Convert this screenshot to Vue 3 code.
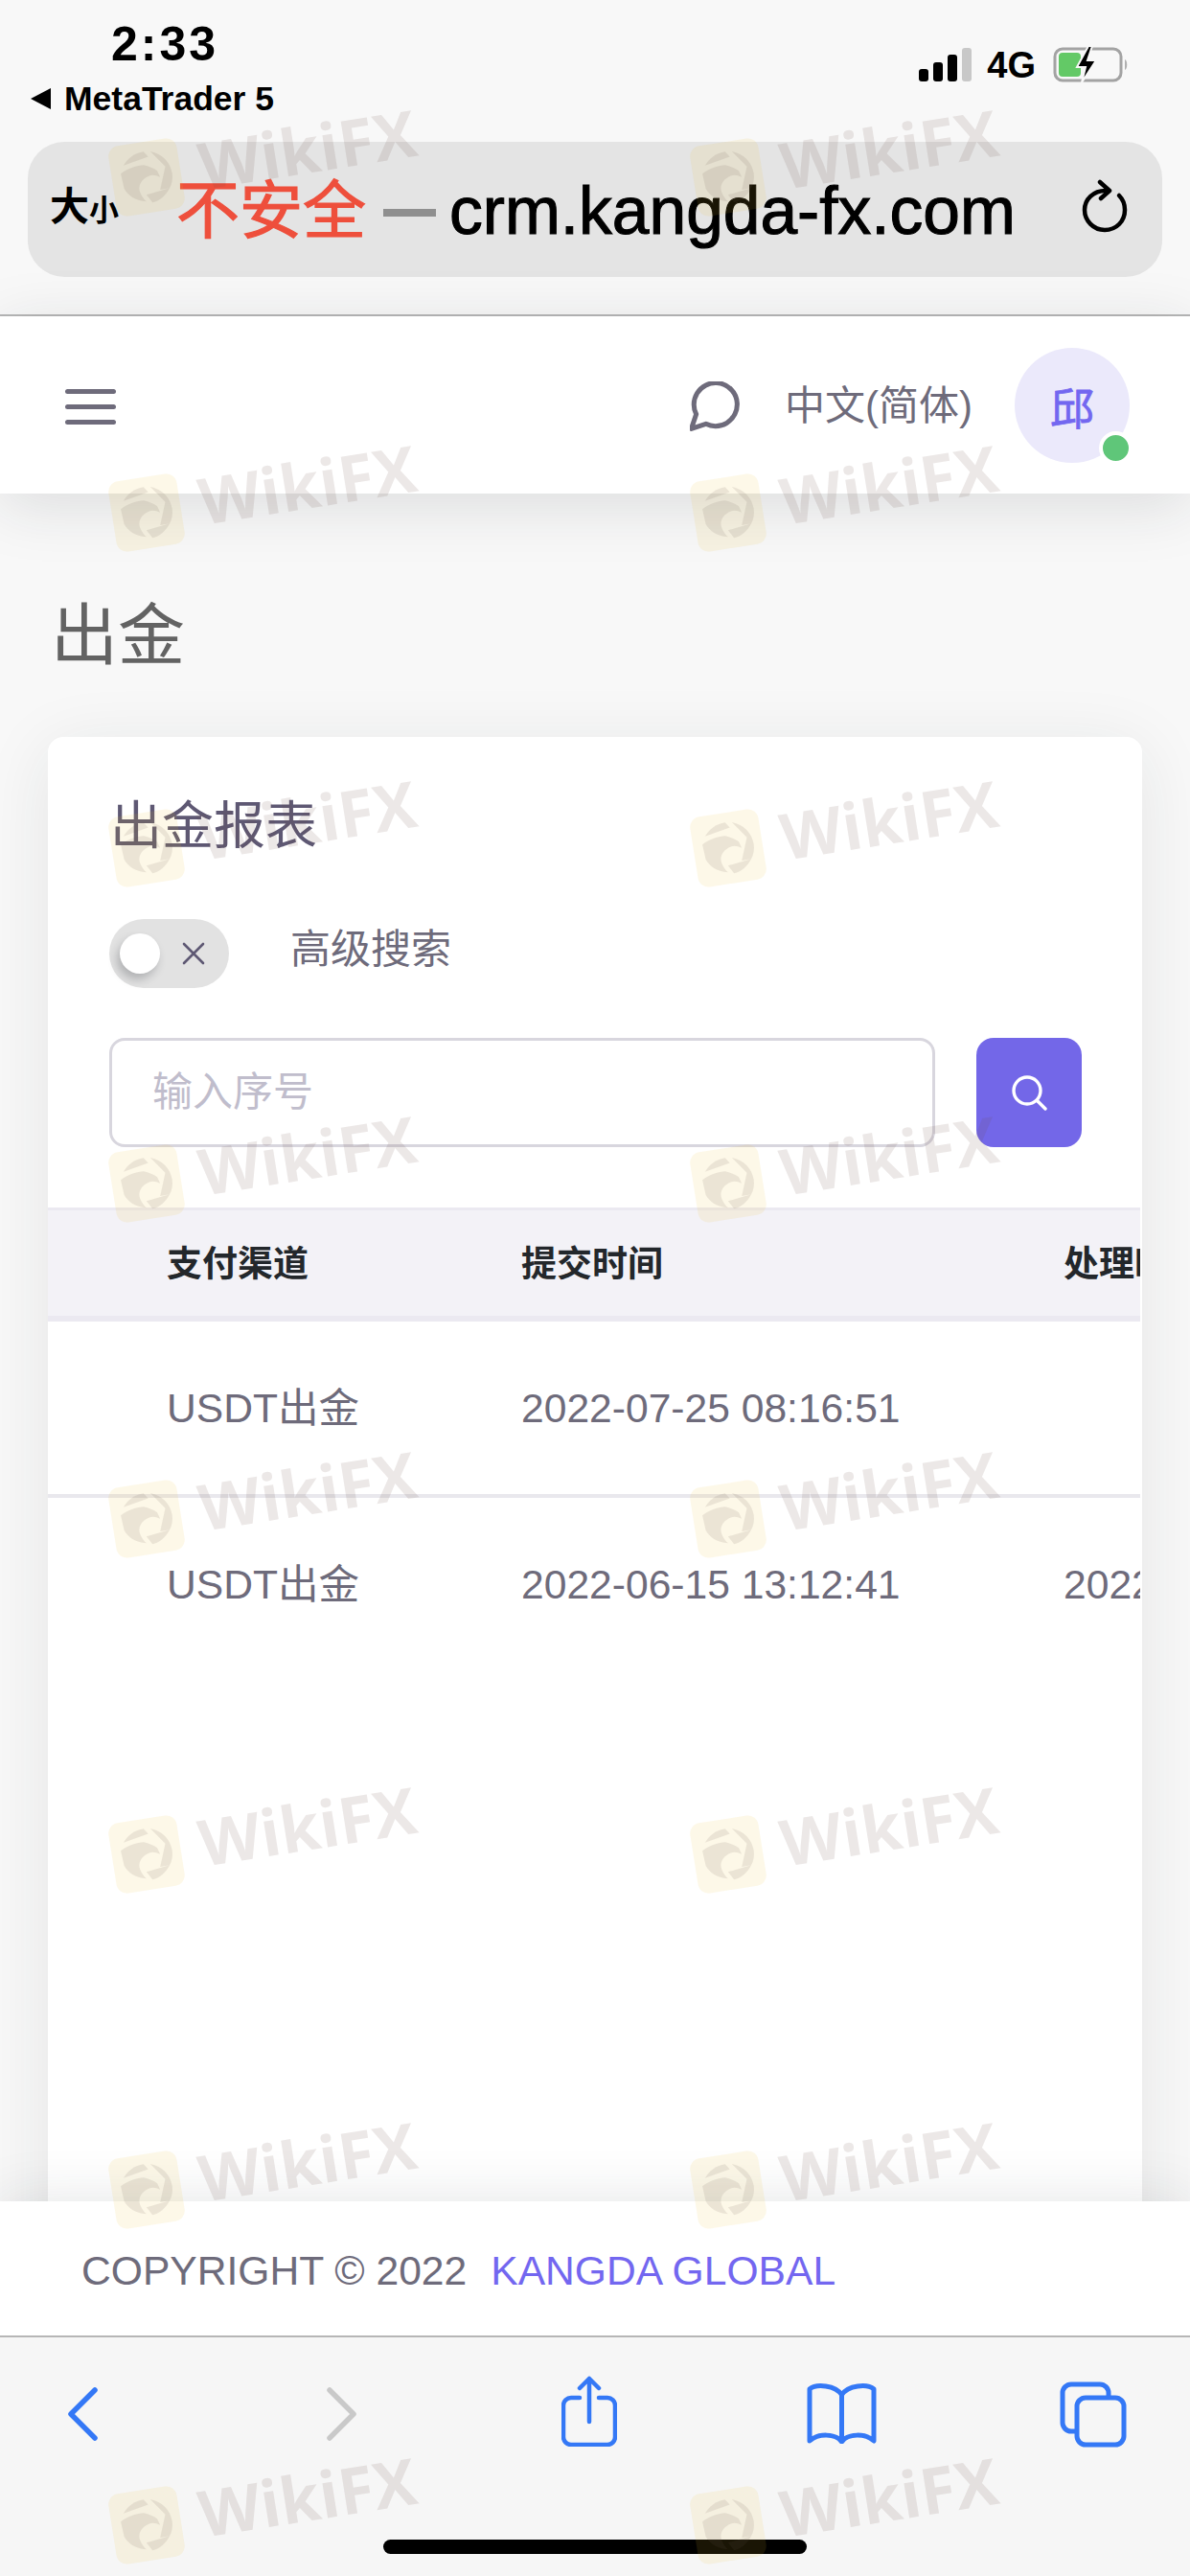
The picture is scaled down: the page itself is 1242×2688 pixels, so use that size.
<script setup>
const watermarkCells = Array.from({ length: 16 }, (_, i) => i)

const columns = ['支付渠道', '提交时间', '处理时间']
const rows = [
  ['USDT出金', '2022-07-25 08:16:51', ''],
  ['USDT出金', '2022-06-15 13:12:41', '2022-06-15 15:40:08'],
]
</script>

<template>
  <div class="phone">
    <header class="browser-top">
      <div class="status">
        <div class="status-left">
          <div class="time">2:33</div>
          <div class="back-app"><span class="back-tri"></span>MetaTrader 5</div>
        </div>
        <div class="status-right">
          <div class="signal">
            <i class="b1"></i><i class="b2"></i><i class="b3"></i><i class="b4"></i>
          </div>
          <span class="net">4G</span>
          <svg class="battery" width="80" height="40" viewBox="0 0 80 40">
            <rect x="2" y="4" width="69" height="33" rx="8" fill="none" stroke="#a3a3a3" stroke-width="3" />
            <rect x="6" y="8" width="23" height="25" rx="4" fill="#63c966" />
            <path d="M75 15c3 1 3 10 0 11z" fill="#b0b0b0" />
            <path d="M37 1 25 23h9l-4 16 15-23h-9l5-15z" fill="#000" stroke="#f8f8f8" stroke-width="2" />
          </svg>
        </div>
      </div>
      <div class="address">
        <span class="text-size">大<small>小</small></span>
        <span class="unsafe">不安全</span>
        <span class="dash"></span>
        <span class="url">crm.kangda-fx.com</span>
        <svg class="reload" width="50" height="60" viewBox="0 0 50 60" fill="none" stroke="#000" stroke-width="4.5" stroke-linecap="round" stroke-linejoin="round">
          <path d="M26 12C13 12 4 21 4 32s9 21 21 21 21-9 21-21c0-6-2-11-6-15" />
          <path d="M20 3l10 9-9 8" />
        </svg>
      </div>
    </header>

    <nav class="topnav">
      <div class="burger"><i></i><i></i><i></i></div>
      <div class="nav-right">
        <svg class="chat" width="52" height="53" viewBox="2.4 2.6 19.6 19.6" fill="none" stroke="#6e6b7b" stroke-width="1.9" stroke-linejoin="round">
          <path d="M21 11.5a8.38 8.38 0 0 1-.9 3.8 8.5 8.5 0 0 1-7.6 4.7 8.38 8.38 0 0 1-3.8-.9L3 21l1.9-5.7a8.38 8.38 0 0 1-.9-3.8 8.5 8.5 0 0 1 4.7-7.6 8.38 8.38 0 0 1 3.8-.9h.5a8.48 8.48 0 0 1 8 8v.5z" />
        </svg>
        <span class="lang">中文(简体)</span>
        <div class="avatar">邱<span class="online"></span></div>
      </div>
    </nav>

    <main class="content">
      <h1 class="page-title">出金</h1>
      <section class="card">
        <h2 class="card-title">出金报表</h2>
        <div class="filter-row">
          <div class="switch">
            <span class="knob"></span>
            <svg width="24" height="24" viewBox="0 0 24 24" stroke="#5e5873" stroke-width="2.6" stroke-linecap="round">
              <path d="M2 2l20 20M22 2 2 22" />
            </svg>
          </div>
          <span class="filter-label">高级搜索</span>
        </div>
        <div class="search-row">
          <input class="search-input" type="text" placeholder="输入序号" />
          <button class="search-btn">
            <svg width="37" height="37" viewBox="0 0 37 37" fill="none" stroke="#fff" stroke-width="3.4" stroke-linecap="round">
              <circle cx="16" cy="16" r="14" />
              <path d="M27 27l8 8" />
            </svg>
          </button>
        </div>
        <div class="table">
          <div class="tr head">
            <div v-for="c in columns" :key="c" class="td">{{ c }}</div>
          </div>
          <div v-for="(r, i) in rows" :key="i" class="tr row">
            <div v-for="(v, j) in r" :key="j" class="td">{{ v }}</div>
          </div>
        </div>
      </section>
    </main>

    <footer class="copyright">
      <span>COPYRIGHT © 2022</span><a class="brand">KANGDA GLOBAL</a>
    </footer>

    <div class="toolbar">
      <div class="tool-icons">
        <svg class="t-back" width="33" height="56" viewBox="0 0 33 56" fill="none" stroke="#3478f6" stroke-width="5.5" stroke-linecap="round" stroke-linejoin="round">
          <path d="M29 3 4 28l25 25" />
        </svg>
        <svg class="t-fwd" width="33" height="56" viewBox="0 0 33 56" fill="none" stroke="#c9c9c9" stroke-width="5.5" stroke-linecap="round" stroke-linejoin="round">
          <path d="M4 3l25 25L4 53" />
        </svg>
        <svg class="t-share" width="58" height="74" viewBox="0 0 58 74" fill="none" stroke="#3478f6" stroke-width="4.5" stroke-linecap="round" stroke-linejoin="round">
          <path d="M19 23h-9a8 8 0 0 0-8 8v33a8 8 0 0 0 8 8h38a8 8 0 0 0 8-8V31a8 8 0 0 0-8-8h-9" />
          <path d="M29 3v45M19 13 29 3l10 10" />
        </svg>
        <svg class="t-book" width="73" height="63" viewBox="0 0 73 63" fill="none" stroke="#3478f6" stroke-width="5" stroke-linejoin="round">
          <path d="M36.500 12C30 2 10 0 3 6v54c9-8 27-8 33.500 1C43 52 61 52 70 60V6C63 0 43 2 36.500 12zM36.500 12v49" />
        </svg>
        <svg class="t-tabs" width="70" height="69" viewBox="0 0 70 69" fill="none" stroke="#3478f6" stroke-width="5" stroke-linejoin="round">
          <path d="M17 52h-5a9 9 0 0 1-9-9V12a9 9 0 0 1 9-9h30a9 9 0 0 1 9 9v5" />
          <rect x="18" y="17" width="49" height="49" rx="9" />
        </svg>
      </div>
      <div class="home-bar"></div>
    </div>

    <div class="watermarks">
      <svg v-for="n in watermarkCells" :key="n" class="wm" width="607" height="350" viewBox="0 0 607 350">
        <g transform="translate(100 175) rotate(-9)">
          <rect x="-36" y="-37" width="72" height="74" rx="11" fill="rgba(240,195,50,.11)" />
          <g fill="rgba(110,90,85,.12)">
            <path d="M-26-8C-18-12-8-14-1-13c5 2 10 5 13 8l2 7c-4-3-8-4-11-3C-6 1-11 8-9 15c1 4 3 8 5 10C-16 22-22 16-25 8z" />
            <path d="M-22-16C-16-23-8-27 1-27l4 6z" />
            <path d="M8-26C20-22 27-11 27 0c0 6-2 11-5 15H12L21-8z" />
            <path d="M-3 18l25-3C17 22 9 27 2 27z" />
          </g>
          <text x="56" y="22" class="wm-text">WikiFX</text>
        </g>
      </svg>
    </div>
  </div>
</template>

<style>
html,
body {
  margin: 0;
  background: #f8f8f8;
}
</style>

<style scoped>
.phone {
  position: relative;
  width: 1242px;
  height: 2688px;
  overflow: hidden;
  display: flex;
  flex-direction: column;
  background: #f8f8f8;
  font-family: "Liberation Sans", "Noto Sans CJK SC", sans-serif;
}

/* safari top */
.browser-top {
  height: 330px;
  box-sizing: border-box;
  background: #f8f8f8;
  border-bottom: 2px solid #b6b6b6;
  padding: 0 29px;
  flex-shrink: 0;
}
.status {
  height: 148px;
  display: flex;
  justify-content: space-between;
}
.status-left {
  padding-top: 19px;
}
.time {
  font-size: 50px;
  line-height: 54px;
  font-weight: 700;
  letter-spacing: 3px;
  margin-left: 87px;
  color: #000;
}
.back-app {
  display: flex;
  align-items: center;
  font-size: 35.500px;
  line-height: 38px;
  font-weight: 700;
  margin-top: 11px;
  color: #000;
}
.back-tri {
  width: 0;
  height: 0;
  border-top: 11px solid transparent;
  border-bottom: 11px solid transparent;
  border-right: 21px solid #000;
  margin: 0 14px 0 3px;
}
.status-right {
  display: flex;
  align-items: flex-end;
  height: 88px;
  padding-right: 34px;
}
.signal {
  display: flex;
  align-items: flex-end;
  gap: 5px;
  height: 35px;
  margin-bottom: 3px;
}
.signal i {
  width: 10px;
  background: #000;
  border-radius: 3px;
}
.signal .b1 { height: 13px; }
.signal .b2 { height: 20px; }
.signal .b3 { height: 28px; }
.signal .b4 { height: 35px; background: #c8c8c8; }
.net {
  font-size: 38px;
  line-height: 40px;
  font-weight: 700;
  margin: 0 18px 0 16px;
  color: #000;
}
.battery {
  margin-bottom: 1px;
}
.address {
  height: 141px;
  border-radius: 38px;
  background: #e4e4e4;
  display: flex;
  align-items: center;
  padding-left: 23px;
  color: #000;
}
.text-size {
  width: 132px;
  flex-shrink: 0;
  font-size: 41px;
  font-weight: 700;
  line-height: 44px;
  margin-top: -2px;
}
.text-size small {
  font-size: 31px;
}
.unsafe {
  font-size: 66px;
  line-height: 70px;
  color: #ee4f3c;
  -webkit-text-stroke: 1.2px #ee4f3c;
  margin-top: 2px;
}
.dash {
  width: 55px;
  height: 8px;
  background: #8f8f8f;
  margin: 6px 14px 0 18px;
}
.url {
  font-size: 69.500px;
  line-height: 76px;
  -webkit-text-stroke: 1.1px #000;
  margin-top: 2px;
}
.reload {
  margin-left: 68px;
  margin-top: -4px;
}

/* nav */
.topnav {
  position: relative;
  z-index: 2;
  height: 185px;
  flex-shrink: 0;
  background: #fff;
  display: flex;
  align-items: center;
  justify-content: space-between;
  padding: 0 63px 0 68px;
  box-shadow: 0 12px 60px rgba(34, 41, 47, 0.13);
}
.burger {
  display: flex;
  flex-direction: column;
  gap: 11px;
  margin-top: 3px;
}
.burger i {
  display: block;
  width: 53px;
  height: 5px;
  border-radius: 3px;
  background: #6e6b7b;
}
.nav-right {
  display: flex;
  align-items: center;
}
.chat {
  margin: 3px 47px 0 0;
}
.lang {
  font-size: 42px;
  color: #6e6b7b;
  margin: -6px 44px 0 0;
}
.avatar {
  position: relative;
  width: 120px;
  height: 120px;
  border-radius: 50%;
  background: #ebe9fb;
  color: #7367f0;
  font-size: 46px;
  -webkit-text-stroke: 0.8px #7367f0;
  display: flex;
  align-items: center;
  justify-content: center;
}
.online {
  position: absolute;
  right: -3px;
  bottom: -2px;
  width: 27px;
  height: 27px;
  border-radius: 50%;
  background: #5fc679;
  border: 4px solid #fff;
}

/* content */
.content {
  flex: 1;
  min-height: 0;
  padding: 115px 50px 0;
  overflow: hidden;
}
.page-title {
  margin: 0 0 71px 3px;
  font-size: 70px;
  line-height: 68px;
  font-weight: 400;
  color: #636363;
}
.card {
  height: 1700px;
  width: 1142px;
  background: #fff;
  border-radius: 16px;
  box-shadow: 0 12px 72px rgba(34, 41, 47, 0.09);
  padding-top: 67px;
  box-sizing: border-box;
}
.card-title {
  margin: 0 0 71px 65px;
  font-size: 54px;
  line-height: 52px;
  font-weight: 400;
  color: #5e5873;
}
.filter-row {
  display: flex;
  align-items: center;
  padding-left: 64px;
  margin-bottom: 52px;
}
.switch {
  width: 125px;
  height: 72px;
  border-radius: 36px;
  background: #e2e2e2;
  display: flex;
  align-items: center;
  box-sizing: border-box;
  padding-left: 11px;
}
.knob {
  width: 42px;
  height: 42px;
  border-radius: 50%;
  background: #fff;
  box-shadow: -3px 6px 10px rgba(34, 41, 47, 0.25);
  margin-right: 23px;
}
.filter-label {
  font-size: 42px;
  line-height: 60px;
  color: #6e6b7b;
  margin: -8px 0 0 64px;
}
.search-row {
  display: flex;
  gap: 43px;
  padding-left: 64px;
  margin-bottom: 63px;
}
.search-input {
  width: 862px;
  height: 114px;
  box-sizing: border-box;
  border: 3px solid #d8d6de;
  border-radius: 16px;
  padding: 0 0 0 42px;
  font-size: 42px;
  font-family: inherit;
  background: transparent;
  outline: none;
}
.search-input::placeholder {
  color: #c0bdcc;
  opacity: 1;
}
.search-btn {
  width: 110px;
  height: 114px;
  border: none;
  padding: 0;
  border-radius: 18px;
  background: #7367e8;
  display: flex;
  align-items: center;
  justify-content: center;
}

/* table */
.table {
  width: 1140px;
  overflow: hidden;
}
.tr {
  display: grid;
  grid-template-columns: 370px 566px 600px;
  width: 1536px;
  align-items: center;
}
.td {
  padding-left: 124px;
  white-space: nowrap;
  line-height: 50px;
}
.head {
  height: 110px;
  background: #f3f2f7;
  border-top: 3px solid #ebe9f1;
  border-bottom: 6px solid #ebe9f1;
  font-size: 37px;
  font-weight: 700;
  color: #23272b;
}
.head .td {
  padding-top: 3px;
}
.row {
  height: 180px;
  font-size: 42.600px;
  color: #6e6b7b;
}
.row + .row {
  border-top: 4px solid #e9e8ed;
}

/* footer */
.copyright {
  position: relative;
  z-index: 2;
  height: 140px;
  flex-shrink: 0;
  background: #fff;
  box-shadow: 0 0 60px rgba(34, 41, 47, 0.12);
  box-sizing: border-box;
  padding: 5px 0 0 85px;
  display: flex;
  align-items: center;
  font-size: 42.600px;
  color: #6e6b7b;
  white-space: nowrap;
}
.brand {
  color: #7367f0;
  margin-left: 25px;
}

/* safari bottom */
.toolbar {
  position: relative;
  z-index: 3;
  height: 251px;
  flex-shrink: 0;
  box-sizing: border-box;
  background: #f6f6f6;
  border-top: 2px solid #b6b6b6;
}
.tool-icons {
  position: relative;
  height: 211px;
}
.tool-icons svg {
  position: absolute;
}
.t-back { left: 70px; top: 52px; }
.t-fwd { left: 340px; top: 52px; }
.t-share { left: 586px; top: 40px; }
.t-book { left: 842px; top: 48px; }
.t-tabs { left: 1106px; top: 46px; }
.home-bar {
  width: 442px;
  height: 15px;
  margin-left: 400px;
  border-radius: 8px;
  background: #000;
}

/* watermark overlay */
.watermarks {
  position: absolute;
  left: 53px;
  top: 10px;
  width: 1214px;
  height: 2678px;
  overflow: hidden;
  pointer-events: none;
  z-index: 10;
  display: flex;
  flex-wrap: wrap;
  align-content: flex-start;
}
.wm {
  display: block;
  flex-shrink: 0;
}
.wm-text {
  font-family: "Open Sans", "Liberation Sans", sans-serif;
  font-size: 67px;
  font-weight: 700;
  fill: rgba(110, 80, 70, 0.13);
}
</style>
